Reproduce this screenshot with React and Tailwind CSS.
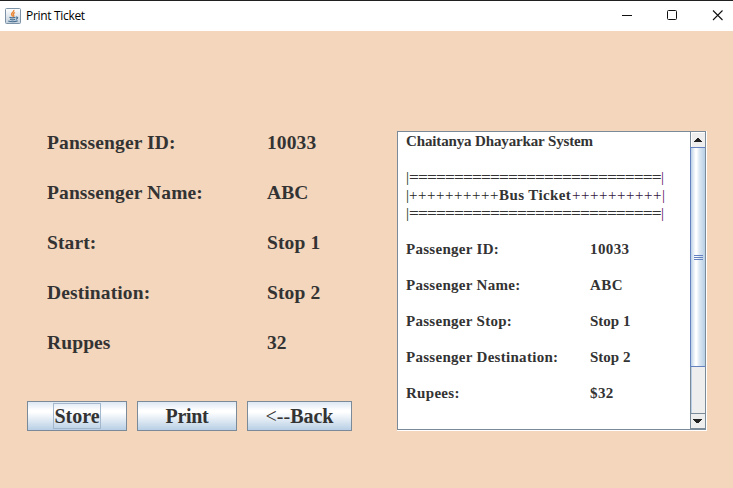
const details = [
  ["Panssenger ID:", "10033"],
  ["Panssenger Name:", "ABC"],
  ["Start:", "Stop 1"],
  ["Destination:", "Stop 2"],
  ["Ruppes", "32"],
];

const ticket = [
  ["Passenger ID:", "10033"],
  ["Passenger Name:", "ABC"],
  ["Passenger Stop:", "Stop 1"],
  ["Passenger Destination:", "Stop 2"],
  ["Rupees:", "$32"],
];

const buttonClass =
  "flex h-[30px] items-center justify-center border border-[#7a8a99] bg-[linear-gradient(180deg,#dde8f3_0%,#ffffff_30%,#ffffff_36%,#b8cfe5_100%)] text-[20px] leading-none font-bold";

function JavaIcon() {
  return (
    <svg width="16" height="16" viewBox="0 0 16 16" fill="none">
      <defs>
        <linearGradient id="tile" x1="0" y1="0" x2="0" y2="1">
          <stop offset="0" stopColor="#fff" />
          <stop offset="1" stopColor="#c3d0dc" />
        </linearGradient>
      </defs>
      <rect x=".5" y=".5" width="15" height="15" rx="1" fill="url(#tile)" stroke="#7c92a6" />
      <path d="M8.8 2C9.5 4 6.2 4.700 6.500 6.300C6.600 7.300 7.700 7.500 7.400 8.600M10 4.500C8.200 5.500 8 6.200 8.700 7.200C9 7.800 8.600 8.300 8.200 8.700" stroke="#e98735" strokeWidth="1.400" />
      <path d="M4.500 9.300C5.500 10 9 9.900 10.500 9.300M5 11.300C6.500 12 8.800 12 10 11.300M3.300 13C5.500 14 10.500 14 12.700 12.800M11 9.200C13.200 8.700 13.200 10.600 10.800 11.300" stroke="#466f91" strokeWidth="1.200" />
    </svg>
  );
}

function TitleBar() {
  return (
    <header className="flex h-[31px] items-center border-t border-[#202020] bg-white pl-[5px] text-black">
      <JavaIcon />
      <span className="ml-[5px] font-['Open_Sans','Noto_Sans',sans-serif] text-[12px] leading-4 tracking-[-0.32px]">
        Print Ticket
      </span>
      <svg className="ml-auto" width="112" height="30" viewBox="621 1 112 30" fill="none" stroke="#111">
        <path d="M622 15.500H632" />
        <rect x="667.500" y="10.500" width="9" height="9" rx="1" />
        <path d="M713 10.500L722.500 20M722.500 10.500L713 20" strokeWidth="1.100" />
      </svg>
    </header>
  );
}

function ScrollBar() {
  return (
    <div className="flex w-[15px] flex-col border-l border-[#7a8a99] bg-[#eeeeee]">
      <div className="flex h-[15px] items-center justify-center border-t border-l border-white bg-[#eeeeee]">
        <svg className="mr-px" width="8" height="4" viewBox="0 0 8 4" fill="#222" shapeRendering="crispEdges">
          <path d="M3 0H5V1H6V2H7V3H8V4H0V3H1V2H2V1H3Z" />
        </svg>
      </div>
      <div className="-ml-px flex h-[220px] items-center justify-center border-y border-l border-[#6382bf] bg-[linear-gradient(90deg,#b8cfe5_0%,#dde8f3_15%,#ffffff_33%,#ffffff_40%,#dde8f3_60%,#b8cfe5_100%)]">
        <div className="flex flex-col gap-px">
          <div className="h-px w-[9px] bg-[#6382bf]" />
          <div className="h-px w-[9px] bg-[#6382bf]" />
          <div className="h-px w-[9px] bg-[#6382bf]" />
        </div>
      </div>
      <div className="flex-1 border-l border-[#b8cfe5]" />
      <div className="flex h-[16px] items-center justify-center border-y border-[#7a8a99] bg-[#eeeeee]">
        <svg className="mr-[2px]" width="9" height="4" viewBox="0 0 9 4" fill="#222" shapeRendering="crispEdges">
          <path d="M0 0H9V1H8V2H7V3H6V4H3V3H2V2H1V1H0Z" />
        </svg>
      </div>
    </div>
  );
}

function DoubleRule() {
  return (
    <div className="flex">
      <span className="w-[3px] font-normal text-[#102a10]">|</span>
      <span className="w-[252px]">
        <span className="inline-block origin-left scale-x-[1.167] tracking-[-0.840px]">
          ============================
        </span>
      </span>
      <span className="font-normal text-[#5a1064]">|</span>
    </div>
  );
}

export default function App() {
  return (
    <div className="flex h-[488px] w-[733px] flex-col overflow-hidden bg-[#f4d6bc] font-['Liberation_Serif',serif] text-[#333333]">
      <TitleBar />
      <main className="flex flex-1 items-start">
        <section className="w-[397px] pt-[87px] pl-[27px]">
          <div className="pl-5">
            {details.map(([label, value]) => (
              <div key={label} className="flex h-[50px] items-center text-[19.5px] leading-none font-bold tracking-[0.120px]">
                <span className="w-[220px]">{label}</span>
                <span>{value}</span>
              </div>
            ))}
          </div>
          <div className="mt-[33px] flex gap-[10px]">
            <button className={`${buttonClass} w-[100px]`}>
              <span className="flex h-[26px] w-12 items-center justify-center border border-[#a3b8cc]">Store</span>
            </button>
            <button className={`${buttonClass} w-[100px] tracking-[-0.300px]`}>Print</button>
            <button className={`${buttonClass} w-[105px]`}>
              <span className="font-normal">&lt;--</span>
              <span>Back</span>
            </button>
          </div>
        </section>
        <section className="mt-[100px] h-[300px] w-[310px] border-r border-b border-white">
          <div className="flex h-[299px] border border-[#7a8a99] bg-white">
            <div className="flex-1 overflow-hidden pl-2 text-[15px] leading-[18px] font-bold whitespace-pre">
              <div className="tracking-[-0.140px]">Chaitanya Dhayarkar System</div>
              <div className="h-[18px]" />
              <DoubleRule />
              <div className="flex">
                <span className="w-[3px] font-normal text-[#102a10]">|</span>
                <span className="w-[90px] font-normal tracking-[0.540px] text-[#222]">++++++++++</span>
                <span className="w-[73px] tracking-[0.400px]">Bus Ticket</span>
                <span className="w-[90px] font-normal tracking-[0.540px] text-[#321640]">++++++++++</span>
                <span className="font-normal text-[#5a1064]">|</span>
              </div>
              <DoubleRule />
              {ticket.map(([label, value]) => (
                <div key={label} className="mt-[18px] flex">
                  <span className="w-[184px] tracking-[0.290px]">{label}</span>
                  <span className={value.startsWith("Stop") ? "" : "tracking-[0.400px]"}>{value}</span>
                </div>
              ))}
            </div>
            <ScrollBar />
          </div>
        </section>
      </main>
    </div>
  );
}
